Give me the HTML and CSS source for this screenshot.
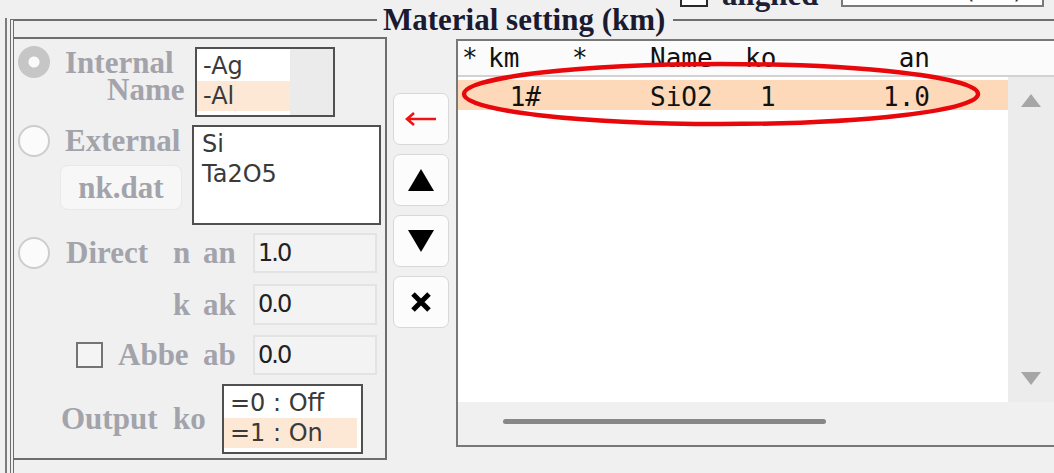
FILE: index.html
```html
<!DOCTYPE html>
<html lang="en">
<head>
    <meta charset="UTF-8">
    <title>Material setting</title>
    <link rel="stylesheet" href="styles.css">
</head>
<body>
    <div class="topstrip">
        <span class="top-check"></span>
        <span class="aligned">aligned</span>
        <div class="topbox">λ (nm)</div>
    </div>

    <div class="main">
        <div class="prev-frame"></div>

        <fieldset class="group">
            <legend>Material setting (km)</legend>
            <div class="group-body">

                <div class="panel">
                    <div class="row row-internal">
                        <span class="radio radio-on"></span>
                        <div class="label label-stack">
                            <div class="internal-line">Internal</div>
                            <div class="name-line">Name</div>
                        </div>
                        <div class="listbox list-internal">
                            <div class="list-col">
                                <div class="item">-Ag</div>
                                <div class="item selected">-Al</div>
                            </div>
                            <div class="list-gutter"></div>
                        </div>
                    </div>

                    <div class="row row-external">
                        <div class="ext-left">
                            <div class="ext-line">
                                <span class="radio"></span>
                                <span class="label ext-label">External</span>
                            </div>
                            <div class="label file-btn">nk.dat</div>
                        </div>
                        <div class="listbox list-external">
                            <div class="item">Si</div>
                            <div class="item">Ta2O5</div>
                        </div>
                    </div>

                    <div class="row row-field row-direct">
                        <div class="cell-main">
                            <span class="radio"></span>
                            <span class="label direct-label">Direct</span>
                        </div>
                        <span class="label cell-sym">n</span>
                        <span class="label cell-key">an</span>
                        <div class="field">1.0</div>
                    </div>

                    <div class="row row-field row-k">
                        <div class="cell-main"></div>
                        <span class="label cell-sym">k</span>
                        <span class="label cell-key">ak</span>
                        <div class="field field-k">0.0</div>
                    </div>

                    <div class="row row-field row-abbe">
                        <div class="cell-main">
                            <span class="check"></span>
                            <span class="label abbe-label">Abbe</span>
                        </div>
                        <span class="label cell-sym"></span>
                        <span class="label cell-key">ab</span>
                        <div class="field">0.0</div>
                    </div>

                    <div class="row row-field row-output">
                        <div class="cell-main">
                            <span class="label output-label">Output</span>
                        </div>
                        <span class="label cell-ko">ko</span>
                        <div class="listbox list-output">
                            <div class="item">=0 : Off</div>
                            <div class="item selected">=1 : On</div>
                        </div>
                    </div>
                </div>

                <div class="tools">
                    <button class="tool">
                        <svg width="32" height="14" viewBox="0 0 32 14">
                            <path d="M2 7 H31 M9 1 L2 7 L9 13" fill="none" stroke="#ee1414" stroke-width="2.6"/>
                        </svg>
                    </button>
                    <button class="tool">
                        <svg width="26" height="22" viewBox="0 0 26 22">
                            <polygon points="13,0 26,22 0,22" fill="#000"/>
                        </svg>
                    </button>
                    <button class="tool">
                        <svg width="26" height="22" viewBox="0 0 26 22">
                            <polygon points="0,0 26,0 13,22" fill="#000"/>
                        </svg>
                    </button>
                    <button class="tool">
                        <svg width="24" height="22" viewBox="0 0 24 22">
                            <path d="M4 3 L20 19 M20 3 L4 19" stroke="#000" stroke-width="5"/>
                        </svg>
                    </button>
                </div>

                <div class="table">
                    <div class="table-head">
                        <span class="c1">*</span>
                        <span class="c2">km</span>
                        <span class="c3">*</span>
                        <span class="c4">Name</span>
                        <span class="c5">ko</span>
                        <span class="c6">an</span>
                    </div>
                    <div class="table-mid">
                        <div class="table-rows">
                            <div class="table-row selected">
                                <span class="c1"></span>
                                <span class="c2 num">1#</span>
                                <span class="c3"></span>
                                <span class="c4">SiO2</span>
                                <span class="c5 ko-val">1</span>
                                <span class="c6">1.0</span>
                            </div>
                        </div>
                        <div class="vscroll">
                            <span class="arrow-up"></span>
                            <span class="arrow-down"></span>
                        </div>
                    </div>
                    <div class="hscroll">
                        <div class="hthumb"></div>
                    </div>
                    <svg class="mark" width="596" height="120">
                        <ellipse cx="263" cy="53" rx="257" ry="30" fill="none" stroke="#e8080c" stroke-width="4.5"/>
                    </svg>
                </div>

            </div>
        </fieldset>
    </div>
</body>
</html>
```

FILE: styles.css
```css
body {
    margin: 0;
    width: 1054px;
    height: 473px;
    overflow: hidden;
    background-color: #f0f0f0;
    font-family: "Liberation Serif", "Times New Roman", serif;
}

/* strip of controls above the group, cut by the window */
.topstrip {
    display: flex;
    align-items: flex-end;
    height: 8px;
    padding-left: 680px;
}

.top-check {
    width: 24px;
    height: 24px;
    border: 2px solid #2a2a2a;
    background-color: #fff;
    margin-bottom: 1px;
}

.aligned {
    margin-left: 14px;
    margin-bottom: -4px;
    font-size: 31px;
    font-weight: bold;
    line-height: 34px;
    color: #1e1e38;
}

.topbox {
    margin-left: 23px;
    margin-bottom: 1px;
    width: 203px;
    height: 34px;
    padding-left: 100px;
    box-sizing: border-box;
    background-color: #fff;
    border: 2px solid #7a7a7a;
    font-family: "DejaVu Sans", sans-serif;
    font-size: 24px;
    line-height: 30px;
    color: #333;
}

.main {
    display: flex;
    margin-top: -5px;
}

.prev-frame {
    flex: none;
    width: 5px;
    height: 460px;
    margin-top: 15px;
    border-right: 2px solid #7c7c7c;
}

.group {
    flex: none;
    width: 1100px;
    min-width: 0;
    margin: 0 0 0 3px;
    padding: 0 0 6px 0;
    border: 2px solid #6e6e6e;
    border-left: 4px double #6e6e6e;
    border-right: none;
}

.group legend {
    margin-left: 363px;
    padding: 0 8px 0 6px;
    font-size: 31px;
    font-weight: bold;
    line-height: 34px;
    color: #1a1a30;
}

.group-body {
    display: flex;
    align-items: flex-start;
}

/* left panel */
.panel {
    flex: none;
    width: 371px;
    padding-bottom: 4px;
    border: 2px solid #6e6e6e;
    border-left: none;
}

.label {
    font-size: 31px;
    font-weight: bold;
    line-height: 34px;
    color: #a3a3ab;
    white-space: nowrap;
}

.row {
    display: flex;
}

.radio {
    flex: none;
    width: 32px;
    height: 32px;
    margin-left: 4px;
    box-sizing: border-box;
    border-radius: 50%;
    border: 2px solid #cdcdcd;
    background-color: #fbfbfb;
}

.radio-on {
    border: none;
    background: radial-gradient(circle, #fafafa 0 5px, #c6c6c6 6px);
}

.listbox {
    flex: none;
    box-sizing: border-box;
    border: 2px solid #505050;
    background-color: #fff;
}

.item {
    height: 30px;
    padding-left: 6px;
    font-family: "DejaVu Sans", sans-serif;
    font-size: 24px;
    line-height: 30px;
    color: #3a3a3a;
    white-space: nowrap;
}

.item.selected {
    background-color: #fce8d4;
}

.row-internal {
    align-items: flex-start;
    height: 70px;
    margin-top: 8px;
}

.row-internal .radio {
    margin-top: -1px;
}

.label-stack {
    width: 133px;
    margin-left: 12px;
    margin-top: 2px;
    line-height: 27px;
}

.internal-line {
    padding-left: 3px;
}

.name-line {
    padding-left: 45px;
}

.list-internal {
    display: flex;
    width: 140px;
    height: 70px;
}

.list-col {
    width: 93px;
    padding-top: 2px;
}

.list-gutter {
    flex: 1;
    background-color: #ebebeb;
}

.row-external {
    height: 100px;
    margin-top: 8px;
}

.ext-left {
    width: 178px;
}

.ext-line {
    display: flex;
    align-items: center;
    height: 32px;
}

.ext-label {
    margin-left: 15px;
    line-height: 26px;
}

.file-btn {
    width: 122px;
    height: 45px;
    margin: 8px 0 0 46px;
    box-sizing: border-box;
    border: 1px solid #e9e9e9;
    border-radius: 8px;
    background-color: #f7f7f7;
    text-align: center;
    line-height: 43px;
}

.list-external {
    width: 189px;
    height: 100px;
    padding-top: 2px;
}

.list-external .item {
    padding-left: 8px;
}

.row-field {
    align-items: center;
    height: 40px;
}

.row-direct {
    margin-top: 8px;
}

.row-k {
    height: 41px;
    margin-top: 11px;
}

.row-abbe {
    margin-top: 10px;
}

.row-output {
    height: 70px;
    margin-top: 9px;
}

.cell-main {
    flex: none;
    display: flex;
    align-items: center;
    width: 155px;
}

.direct-label {
    margin-left: 16px;
}

.check {
    flex: none;
    width: 27px;
    height: 26px;
    margin-left: 62px;
    box-sizing: border-box;
    border: 2px solid #747474;
    background-color: #f4f4f4;
}

.abbe-label {
    margin-left: 15px;
}

.output-label {
    padding-left: 47px;
}

.cell-sym {
    flex: none;
    width: 30px;
    height: 34px;
    padding-left: 4px;
    box-sizing: border-box;
}

.cell-key {
    flex: none;
    width: 54px;
    padding-left: 4px;
    box-sizing: border-box;
}

.cell-ko {
    flex: none;
    width: 53px;
    padding-left: 4px;
    box-sizing: border-box;
}

.field {
    flex: none;
    width: 124px;
    height: 40px;
    padding-left: 3px;
    box-sizing: border-box;
    border: 2px solid #e3e3e3;
    background-color: #f3f3f3;
    font-family: "DejaVu Sans", sans-serif;
    font-size: 24px;
    letter-spacing: -2px;
    line-height: 36px;
    color: #222;
}

.field-k {
    height: 41px;
}

.list-output {
    width: 141px;
    height: 70px;
    padding-top: 2px;
}

.list-output .item.selected {
    margin: 0 4px 0 0;
}

/* middle buttons */
.tools {
    flex: none;
    display: flex;
    flex-direction: column;
    gap: 9px;
    width: 56px;
    margin: 56px 0 0 6px;
}

.tool {
    display: flex;
    align-items: center;
    justify-content: center;
    height: 52px;
    padding: 0;
    border: 1px solid #d8d8d8;
    border-radius: 7px;
    background-color: #fcfcfc;
}

/* list of materials */
.table {
    position: relative;
    flex: none;
    display: flex;
    flex-direction: column;
    width: 600px;
    height: 408px;
    margin: 2px 0 0 7px;
    box-sizing: border-box;
    border: 2px solid #787878;
    font-family: "DejaVu Sans Mono", monospace;
    font-size: 26px;
    color: #111;
}

.table-head,
.table-row {
    display: grid;
    grid-template-columns: 24px 63px 95px 100px 60px 134px;
    white-space: pre;
}

.table-head {
    height: 34px;
    line-height: 34px;
    border-bottom: 2px solid #d2d2d2;
    background-color: #fbfbfb;
}

.c1 { padding-left: 4px; }
.c2 { padding-left: 6px; }
.c3 { padding-left: 27px; }
.c4 { padding-left: 10px; }
.c5 { padding-left: 5px; }
.c6 { padding-right: 4px; text-align: right; }

.c2.num {
    padding: 0 4px 0 0;
    text-align: right;
}

.c5.ko-val {
    padding-left: 20px;
}

.table-mid {
    flex: 1;
    display: flex;
}

.table-rows {
    flex: 1;
    padding-top: 3px;
    background-color: #fff;
}

.table-row {
    height: 30px;
    line-height: 34px;
}

.table-row.selected {
    background-color: #fdd9b9;
}

.vscroll {
    display: flex;
    flex-direction: column;
    justify-content: space-between;
    align-items: center;
    width: 46px;
    padding: 17px 0;
    box-sizing: border-box;
    background-color: #ececec;
}

.arrow-up {
    border-left: 10px solid transparent;
    border-right: 10px solid transparent;
    border-bottom: 13px solid #a6a6a6;
}

.arrow-down {
    border-left: 10px solid transparent;
    border-right: 10px solid transparent;
    border-top: 13px solid #a6a6a6;
}

.hscroll {
    height: 43px;
    padding-top: 17px;
    box-sizing: border-box;
    background-color: #f0f0f0;
}

.hthumb {
    width: 323px;
    height: 5px;
    margin-left: 45px;
    border-radius: 3px;
    background-color: #878787;
}

.mark {
    position: absolute;
    left: 0;
    top: 0;
    pointer-events: none;
}
```
